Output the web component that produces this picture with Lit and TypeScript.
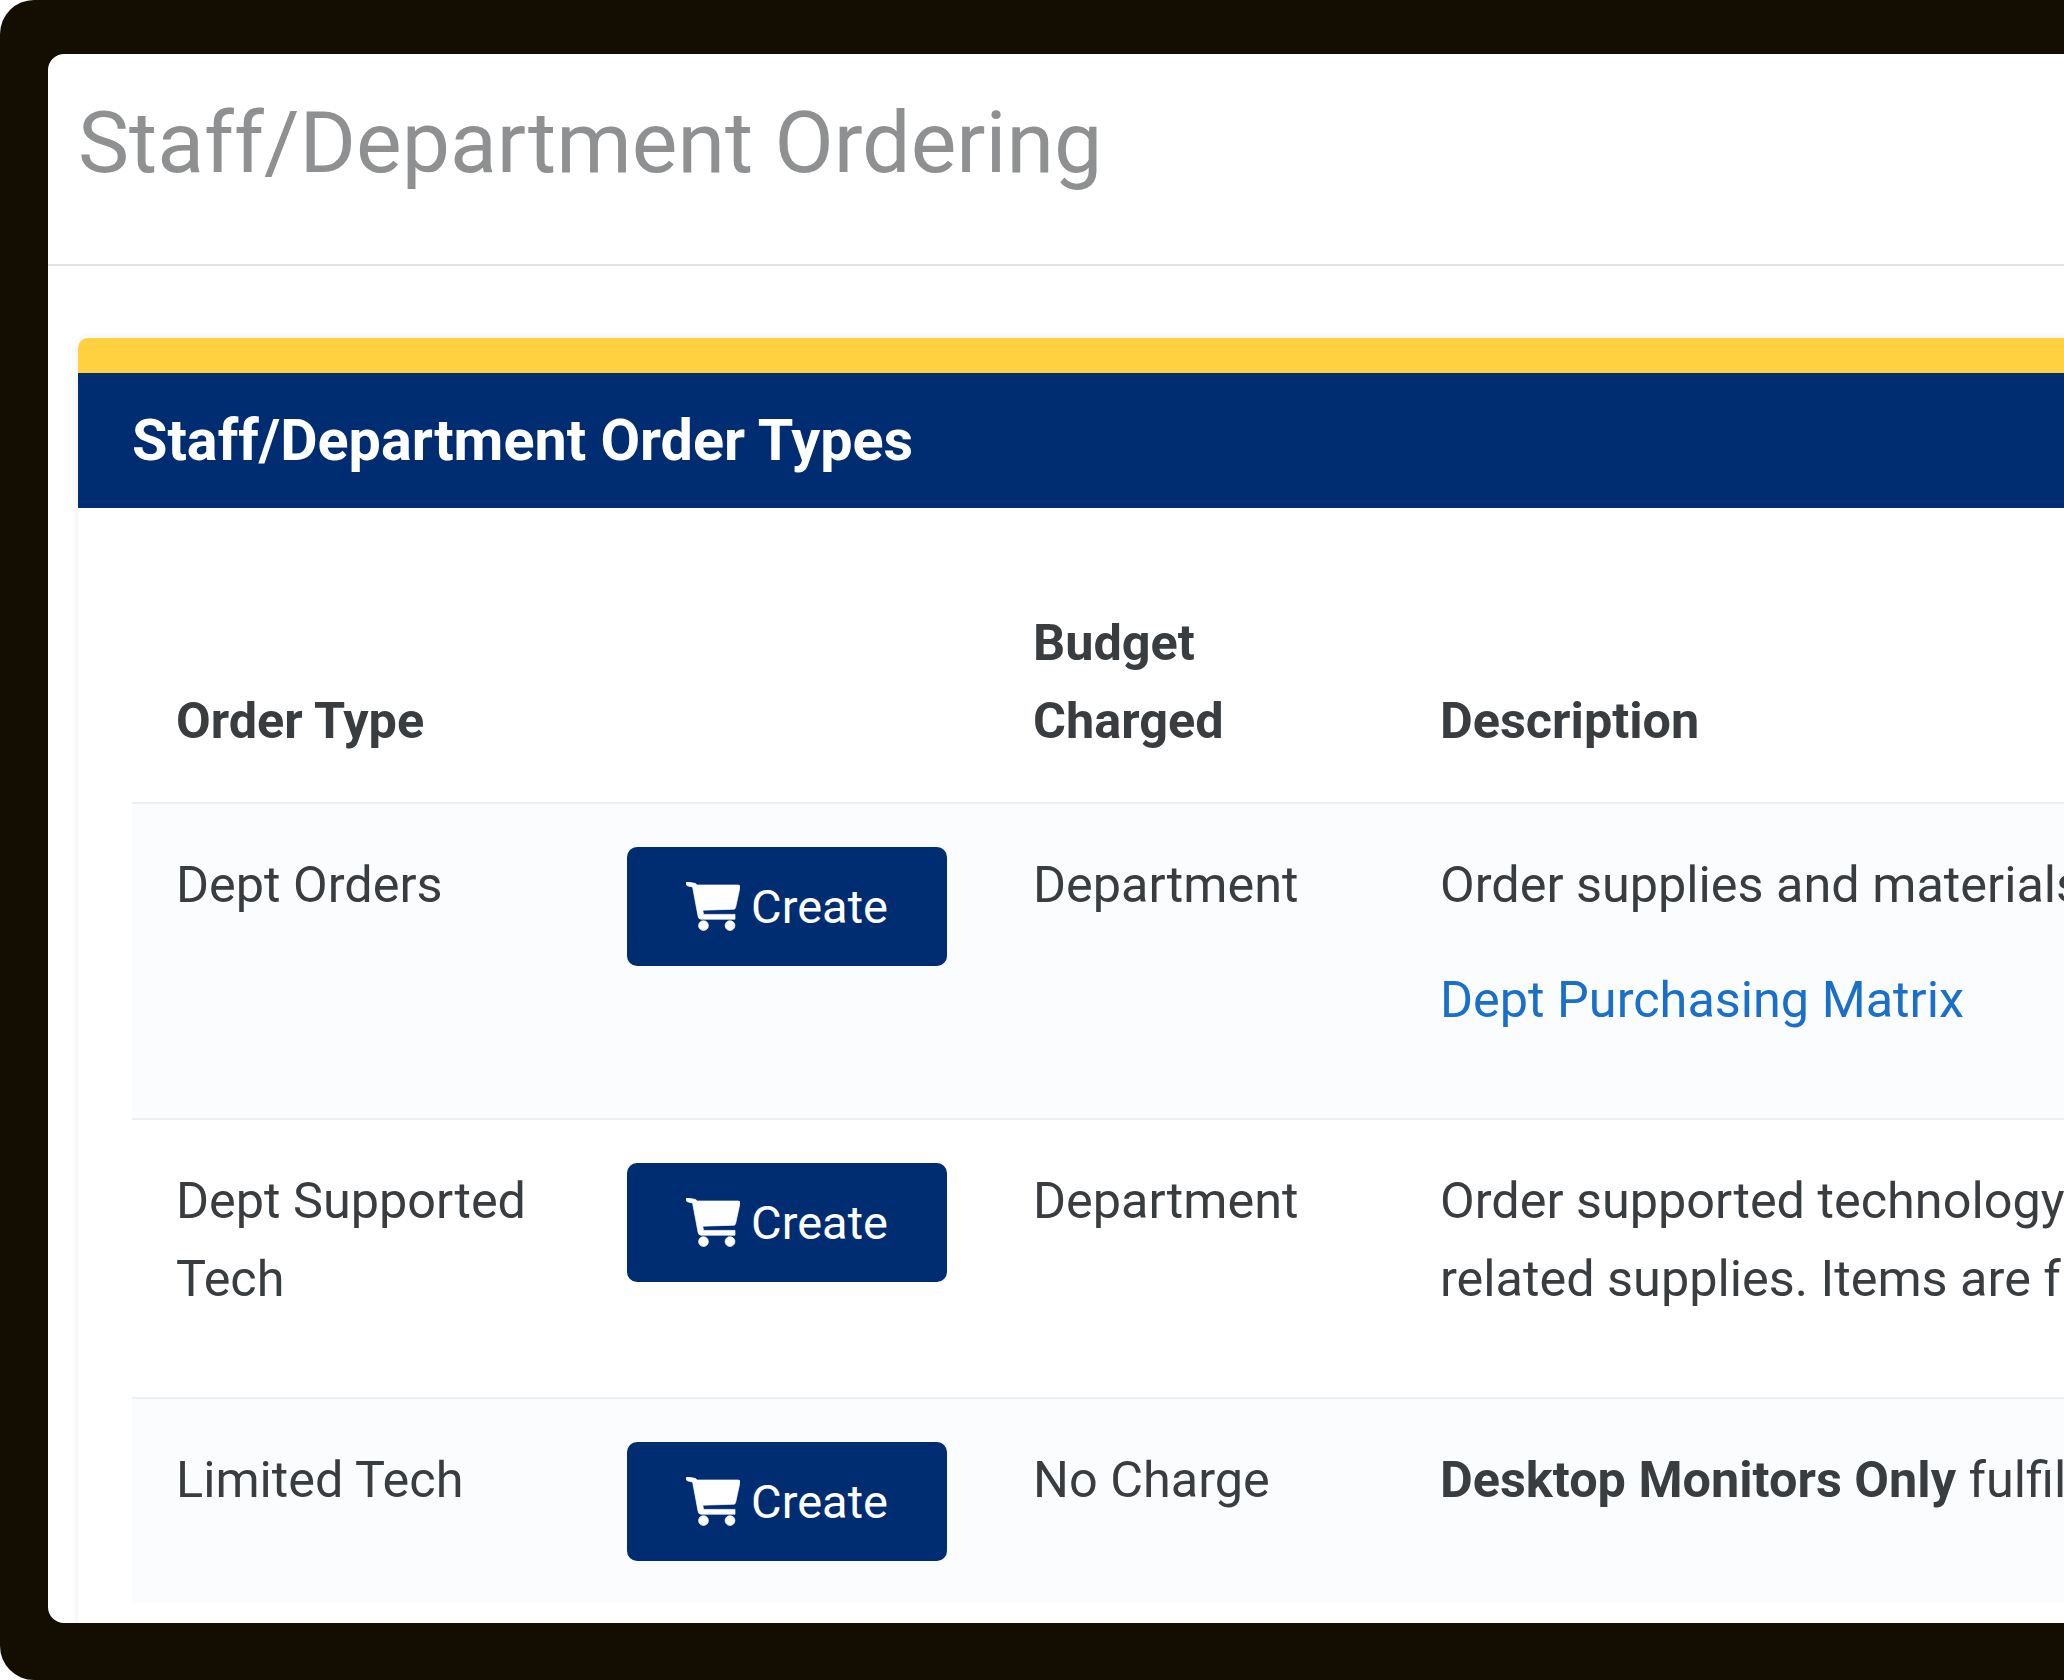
import { LitElement, html, css, svg } from "lit";
import { customElement } from "lit/decorators.js";

const cart = svg`
  <path d="M6 10.6 Q5.6 13.4 8 14 L12.6 15 L18 44 Q18.5 47.2 21 47.2 L55 47.2 L55 42.4 L23.6 42.4 L22.7 38.2 L54 37.2 Q55.2 37.1 55.6 35.5 L60 15.2 Q60.4 13 58 13 L17.2 13 L15.6 11.5 L8 10 Q6.2 9.8 6 10.6 Z" />
  <circle cx="23.5" cy="53.6" r="4.9" />
  <circle cx="50" cy="53.6" r="4.9" />
`;

const rows = [
  {
    type: html`Dept Orders`,
    budget: "Department",
    desc: html`<p class="lead">Order supplies and materials charged to your department budget.</p><p class="tail"><a>Dept Purchasing Matrix</a></p>`,
  },
  {
    type: html`Dept Supported<br />Tech`,
    budget: "Department",
    desc: html`<p>Order supported technology and<br />related supplies. Items are fulfilled by central IT.</p>`,
  },
  {
    type: html`Limited Tech`,
    budget: "No Charge",
    desc: html`<p class="last"><b>Desktop Monitors Only</b> fulfilled by central IT.</p>`,
  },
];

@customElement("app-root")
export class AppRoot extends LitElement {
  static styles = css`
    :host {
      display: block;
      width: 2064px;
      height: 1680px;
      overflow: hidden;
      background: #fff;
      font-family: Roboto, "Liberation Sans", sans-serif;
      color: #3a3d40;
    }
    .frame {
      height: 1680px;
      box-sizing: border-box;
      padding: 54px 0 57px 48px;
      background: #140d02;
      border-radius: 34px 0 0 34px;
    }
    .panel {
      height: 100%;
      background: #fff;
      border-radius: 16px 0 0 16px;
      overflow: hidden;
    }
    .page-head {
      height: 212px;
      box-sizing: border-box;
      border-bottom: 2px solid #dfe3e7;
      padding: 31px 0 0 30px;
    }
    h1 {
      margin: 0;
      font-size: 86.1px;
      line-height: 116px;
      font-weight: 400;
      color: #8f9091;
      white-space: nowrap;
    }
    .body {
      padding: 72px 0 0 30px;
    }
    .card {
      width: 2400px;
      padding-bottom: 60px;
      background: #fff;
      border-top: 35px solid #ffd140;
      border-radius: 10px 10px 0 0;
      box-shadow: 0 0 8px rgba(40, 40, 90, 0.09);
    }
    .card-head {
      height: 135px;
      box-sizing: border-box;
      display: flex;
      align-items: center;
      padding-left: 54px;
      background: #002d72;
      color: #fff;
      font-size: 57.5px;
      font-weight: 700;
      white-space: nowrap;
    }
    .table {
      padding: 96px 0 0 54px;
      font-size: 50.4px;
      line-height: 78px;
    }
    .row {
      display: grid;
      grid-template-columns: 451px 406px 407px 1fr;
    }
    .row > div {
      padding: 42px 0 44px 44px;
      white-space: nowrap;
    }
    .row > .btn-cell {
      padding: 43px 0 42px 44px;
    }
    .thead > div {
      padding-top: 0;
      padding-bottom: 42px;
      align-self: end;
      font-weight: 700;
    }
    .tr {
      border-top: 2px solid #edeff1;
    }
    .tr.odd {
      background: #fbfcfe;
    }
    p {
      margin: 0 0 35px;
    }
    p.lead {
      margin-bottom: 37px;
    }
    p.last {
      margin-bottom: 0;
    }
    a {
      color: #1a6fc9;
    }
    b {
      font-weight: 700;
    }
    .btn {
      display: flex;
      align-items: center;
      justify-content: center;
      gap: 11px;
      width: 320px;
      height: 119px;
      background: #002d72;
      color: #fff;
      border-radius: 10px;
      font-size: 47px;
      line-height: 1;
    }
    .btn svg {
      width: 54px;
      height: 49px;
      fill: #fff;
      stroke: #fff;
      stroke-width: 0.7;
    }
  `;

  render() {
    return html`
      <div class="frame">
        <div class="panel">
          <div class="page-head"><h1>Staff/Department Ordering</h1></div>
          <div class="body">
            <section class="card">
              <div class="card-head">Staff/Department Order Types</div>
              <div class="table">
                <div class="row thead">
                  <div>Order Type</div>
                  <div></div>
                  <div>Budget<br />Charged</div>
                  <div>Description</div>
                </div>
                ${rows.map(
                  (r, i) => html`
                    <div class="row tr ${i % 2 === 0 ? "odd" : ""}">
                      <div>${r.type}</div>
                      <div class="btn-cell">
                        <div class="btn">
                          <svg viewBox="6 10 54 49">${cart}</svg><span>Create</span>
                        </div>
                      </div>
                      <div>${r.budget}</div>
                      <div>${r.desc}</div>
                    </div>
                  `
                )}
              </div>
            </section>
          </div>
        </div>
      </div>
    `;
  }
}
